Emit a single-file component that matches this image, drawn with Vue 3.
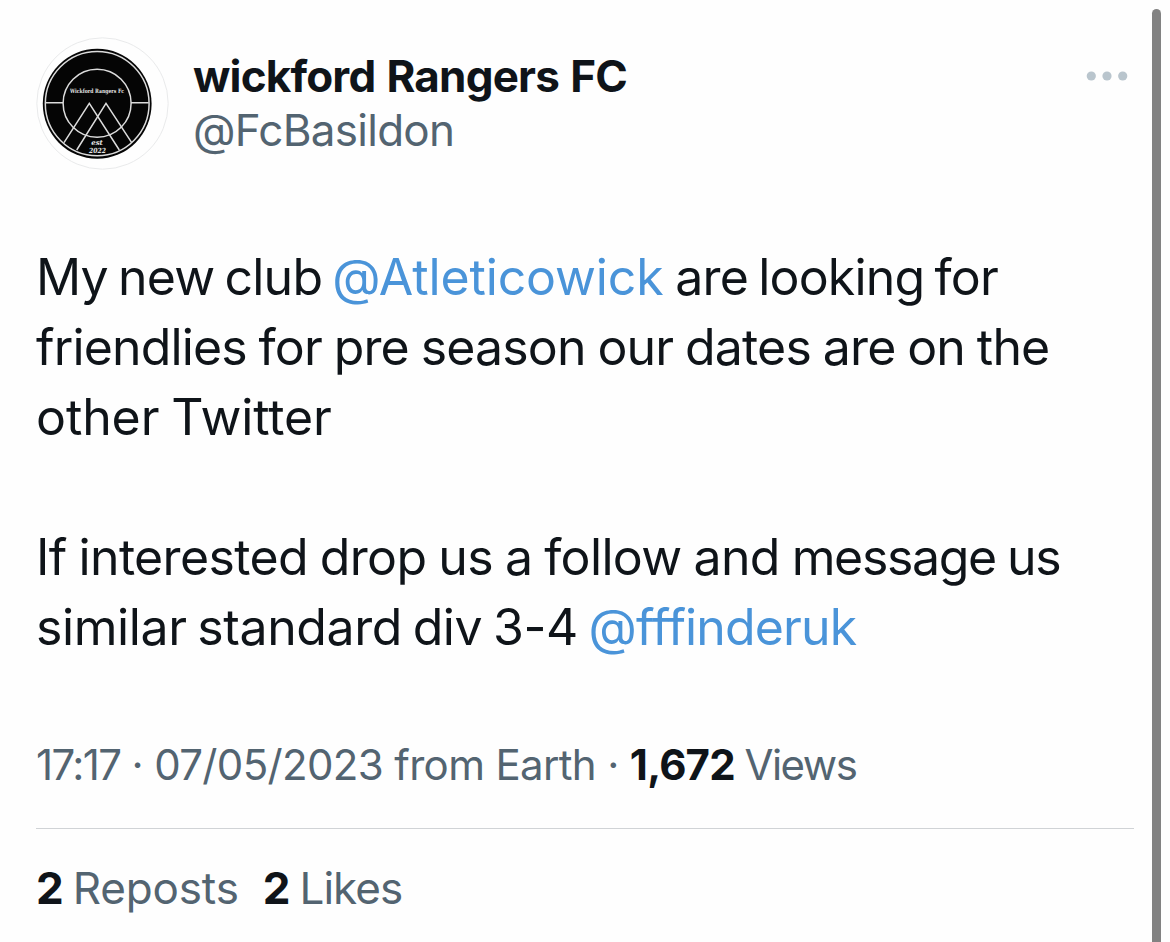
<script setup>
import { ref } from 'vue';

const author = ref({ name: 'wickford Rangers FC', handle: '@FcBasildon' });

const lines = [
  { id: 'one', parts: [{ text: 'My new club ' }, { text: '@Atleticowick', type: 'mention' }, { text: ' are looking for' }] },
  { id: 'two', parts: [{ text: 'friendlies for pre season our dates are on the' }] },
  { id: 'three', parts: [{ text: 'other Twitter' }] },
  { id: 'blank', parts: [] },
  { id: 'five', parts: [{ text: 'If interested drop us a follow and ' }, { text: 'message us', type: 'tight' }] },
  { id: 'six', parts: [{ text: 'similar standard div 3-4 ' }, { text: '@fffinderuk', type: 'mention' }] },
];
</script>

<template>
  <div class="page">
    <article class="post">
      <header class="header">
        <div class="avatar">
          <svg viewBox="0 0 133 133" width="133" height="133">
            <circle cx="66.5" cy="66.5" r="65.7" fill="#fefefe" stroke="#e9eaeb" stroke-width="1" />
            <ellipse cx="61.2" cy="66.8" rx="54.4" ry="55" fill="#050505" />
            <g fill="none" stroke="#dcdcdc" stroke-width="1.5">
              <ellipse cx="61.2" cy="66.6" rx="51.9" ry="52.2" />
              <circle cx="61.1" cy="66.3" r="34" />
              <path d="M9.6 65.7H27M95 65.7H112.8" />
              <path d="M28 105.7L53.3 66.3L83.3 113" />
              <path d="M40.7 113L70 66.3L95.7 105.7" />
            </g>
            <text class="crest-name" x="61" y="56.3" textLength="54" lengthAdjust="spacingAndGlyphs">Wickford Rangers Fc</text>
            <text class="crest-year" x="61" y="108">est</text>
            <text class="crest-year" x="61.5" y="116" textLength="17" lengthAdjust="spacingAndGlyphs">2022</text>
          </svg>
        </div>
        <div class="author">
          <div class="name">{{ author.name }}</div>
          <div class="handle">{{ author.handle }}</div>
        </div>
        <svg class="more" viewBox="0 0 42 10" width="42" height="10">
          <circle cx="5.3" cy="5" r="4.6" />
          <circle cx="21" cy="5" r="4.6" />
          <circle cx="36.7" cy="5" r="4.6" />
        </svg>
      </header>

      <div class="body">
        <div v-for="line in lines" :key="line.id" class="line" :class="line.id">
          <span v-for="part in line.parts" :key="part.text" :class="part.type">{{ part.text }}</span>
        </div>
      </div>

      <div class="meta">
        <span class="time">17:17</span><span class="date"> · 07/05/2023 from Earth · </span><strong>1,672</strong><span class="views">Views</span>
      </div>

      <footer class="stats">
        <span class="stat"><strong>2</strong><span class="reposts">Reposts</span></span>
        <span class="stat"><strong>2</strong><span class="likes">Likes</span></span>
      </footer>
    </article>
    <div class="scrollbar"></div>
  </div>
</template>

<style>
body {
  margin: 0;
  background: #fefefe;
}
</style>

<style scoped>
.page {
  display: flex;
  justify-content: space-between;
  height: 942px;
  overflow: hidden;
  background: #fefefe;
  color: #0f1419;
  font-family: Inter, "Liberation Sans", sans-serif;
}

.post {
  width: 1098px;
  padding: 37px 0 0 36px;
}

.scrollbar {
  width: 9px;
  margin: 9px 9px 0 0;
  border-radius: 5px 5px 0 0;
  background: #828282;
}

.header {
  display: flex;
  height: 133px;
}

.avatar {
  width: 133px;
  height: 133px;
}

.avatar svg {
  display: block;
}

.crest-name, .crest-year {
  fill: #e4e4e4;
  font-family: "DejaVu Serif", serif;
  font-weight: bold;
  text-anchor: middle;
}

.crest-name { font-size: 5.8px; }
.crest-year { font-size: 7px; font-style: italic; }

.author {
  flex: 1;
  padding: 12px 0 0 24px;
  font-size: 44px;
  line-height: 54px;
}

.name {
  font-weight: 700;
  letter-spacing: -0.82px;
  word-spacing: 1.6px;
}

.handle {
  color: #536471;
  letter-spacing: -0.72px;
}

.more {
  margin: 34px 6px 0 0;
  fill: #b9c5cd;
}

.body {
  margin-top: 72px;
  font-size: 50px;
}

.line {
  height: 70px;
  line-height: 70px;
  white-space: pre;
}

.mention { color: #4a94d9; }

.one { letter-spacing: -0.8px; word-spacing: -3.1px; }
.one .mention { margin-right: 1.5px; letter-spacing: -0.13px; }
.two { letter-spacing: -0.85px; word-spacing: -1.4px; }
.three { letter-spacing: -0.1px; word-spacing: -2px; }
.five { letter-spacing: -0.65px; word-spacing: -1.5px; }
.five .tight { letter-spacing: -1.35px; }
.six { letter-spacing: -0.4px; word-spacing: -3px; }
.six .mention { letter-spacing: -0.85px; }

.meta {
  display: flex;
  margin-top: 78px;
  padding-bottom: 38px;
  border-bottom: 1px solid #d0d3d6;
  color: #536471;
  font-size: 42px;
  line-height: 50px;
  white-space: pre;
}

.time { letter-spacing: -1.6px; }
.date { letter-spacing: -0.65px; }

.meta strong {
  margin-right: 9.5px;
  letter-spacing: -0.8px;
}

.views { letter-spacing: -1.5px; }

.meta strong, .stat strong {
  color: #0f1419;
  font-weight: 700;
}

.stats {
  display: flex;
  gap: 24px;
  margin-top: 34px;
  color: #536471;
  font-size: 44px;
  line-height: 50px;
}

.stat {
  display: flex;
  gap: 9px;
}

.reposts { letter-spacing: -0.15px; }
.likes { letter-spacing: -0.95px; }
</style>
